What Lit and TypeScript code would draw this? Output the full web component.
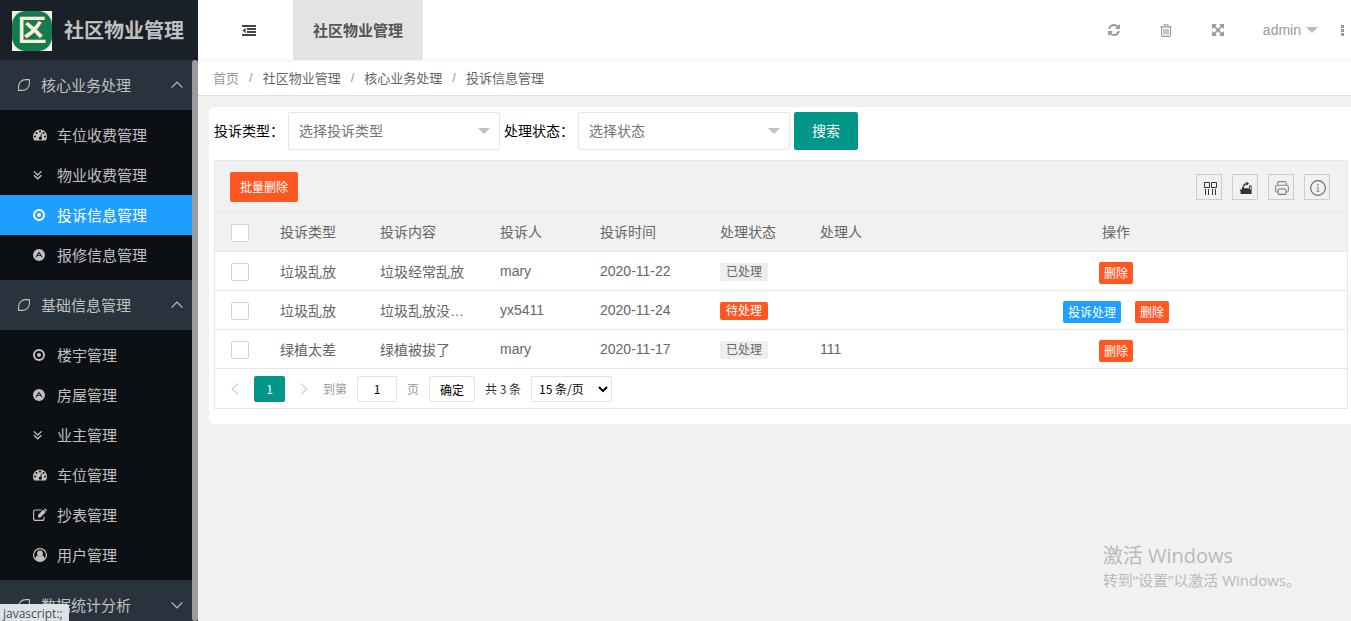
import { LitElement, html, css, svg, nothing } from "lit";
import { customElement, state } from "lit/decorators.js";
import { classMap } from "lit/directives/class-map.js";

type IconName =
  | "leaf" | "up" | "down" | "gauge" | "double-down" | "target" | "adn" | "edit" | "user"
  | "outdent" | "refresh" | "trash" | "expand" | "dots"
  | "columns" | "export" | "print" | "info" | "prev" | "next";

const shapes: Record<IconName, { box: string; body: unknown }> = {
  leaf: {
    box: "0 0 12 12",
    body: svg`<path d="M11.4 .6H7.600A7 7 0 0 0 .6 7.600V11.400H4.400A7 7 0 0 0 11.400 4.400Z" fill="none" stroke="currentColor" stroke-width="1.1" stroke-linejoin="round"/>`,
  },
  up: { box: "0 0 12 12", body: svg`<path d="M.6 8.6 6 3.2 11.4 8.6" fill="none" stroke="currentColor" stroke-width="1.2"/>` },
  down: { box: "0 0 12 12", body: svg`<path d="M.6 3.4 6 8.8 11.4 3.4" fill="none" stroke="currentColor" stroke-width="1.2"/>` },
  gauge: {
    box: "0 0 14 14",
    body: svg`<path fill-rule="evenodd" fill="currentColor" d="M7 1.5A7 7 0 0 0 0 8.5Q0 10.6 1.1 12.3Q1.3 12.6 1.6 12.6H12.4Q12.7 12.6 12.9 12.3Q14 10.6 14 8.5A7 7 0 0 0 7 1.5ZM2 7.5A1 1 0 1 1 2 9.5A1 1 0 1 1 2 7.5ZM3.5 4A1 1 0 1 1 3.5 6A1 1 0 1 1 3.5 4ZM7 2.5A1 1 0 1 1 7 4.5A1 1 0 1 1 7 2.5ZM10.5 4A1 1 0 1 1 10.5 6A1 1 0 1 1 10.5 4ZM12 7.5A1 1 0 1 1 12 9.5A1 1 0 1 1 12 7.5ZM8.2 5.4 9 5.6 8.2 8.7A1.6 1.6 0 1 1 7.4 8.5Z"/>`,
  },
  "double-down": {
    box: "0 0 14 14",
    body: svg`<path d="M.9 3.400 4.700 7 8.500 3.400M.9 7.200 4.700 10.800 8.500 7.200" fill="none" stroke="currentColor" stroke-width="1.3"/>`,
  },
  target: {
    box: "0 0 14 14",
    body: svg`<circle cx="6" cy="7" r="5" fill="none" stroke="currentColor" stroke-width="2"/><circle cx="6" cy="7" r="2" fill="currentColor"/>`,
  },
  adn: {
    box: "0 0 14 14",
    body: svg`<path fill-rule="evenodd" fill="currentColor" d="M6 1A6 6 0 1 0 6 13A6 6 0 1 0 6 1ZM6 3.6 9.6 9.2H8.5L7.8 8.1H4.2L3.5 9.2H2.4ZM6 5.3 4.8 7.2H7.2Z"/>`,
  },
  edit: {
    box: "0 0 14 14",
    body: svg`<path d="M8.6 2H2.6Q.6 2 .6 4V10.4Q.6 12.4 2.6 12.4H9Q11 12.4 11 10.4V8.8" fill="none" stroke="currentColor" stroke-width="1.1"/><path d="M5 7 10.4 1.6 12.8 4 7.4 9.4H5ZM11 1 11.6 .6Q12.1 .3 12.6 .8L13.6 1.8Q14.1 2.3 13.7 2.9L13.3 3.4Z" fill="currentColor"/>`,
  },
  user: {
    box: "0 0 14 14",
    body: svg`<circle cx="7" cy="7" r="6.4" fill="none" stroke="currentColor" stroke-width="1.2"/><circle cx="7" cy="5.4" r="2.9" fill="currentColor"/><path d="M2.4 11Q2.7 7.6 4.8 7.4Q7 9.3 9.2 7.4Q11.3 7.6 11.6 11Q9.8 13.2 7 13.2T2.4 11Z" fill="currentColor"/>`,
  },
  outdent: {
    box: "0 0 14 11",
    body: svg`<path d="M0 0H14V2H0ZM5 3H14V5H5ZM5 6H14V8H5ZM0 9H14V11H0ZM3.6 2.8V8.2L.4 5.5Z" fill="currentColor"/>`,
  },
  refresh: {
    box: "0 0 1792 1792",
    body: svg`<path fill="currentColor" d="M1639 1056q0 5-1 7-64 268-268 434.500t-478 166.500q-146 0-282.500-55t-243.500-157l-129 129q-19 19-45 19t-45-19-19-45v-448q0-26 19-45t45-19h448q26 0 45 19t19 45-19 45l-137 137q71 66 161 102t187 36q134 0 250-65t186-179q11-17 53-117 8-23 30-23h192q13 0 22.500 9.500t9.500 22.500zm25-800v448q0 26-19 45t-45 19h-448q-26 0-45-19t-19-45 19-45l138-138q-148-137-349-137-134 0-250 65t-186 179q-11 17-53 117-8 23-30 23h-199q-13 0-22.500-9.500t-9.500-22.500v-7q65-268 270-434.500t480-166.500q146 0 284 55.500t245 156.500l130-129q19-19 45-19t45 19 19 45z"/>`,
  },
  trash: {
    box: "0 0 12 13",
    body: svg`<path d="M.3 2.900H11.700M1.600 3V11.200Q1.600 12.400 2.800 12.400H9.200Q10.400 12.400 10.400 11.200V3M3.600 2.800 4.200 .7H7.800L8.400 2.800M4 5V10.500M6 5V10.500M8 5V10.500" fill="none" stroke="currentColor" stroke-width="1.100"/>`,
  },
  expand: {
    box: "0 0 1792 1792",
    body: svg`<path fill="currentColor" d="M1411 541l-355 355 355 355 144-144q29-31 70-14 39 17 39 59v448q0 26-19 45t-45 19h-448q-42 0-59-40-17-39 14-69l144-144-355-355-355 355 144 144q31 30 14 69-17 40-59 40h-448q-26 0-45-19t-19-45v-448q0-42 40-59 39-17 69 14l144 144 355-355-355-355-144 144q-19 19-45 19-12 0-24-5-40-17-40-59v-448q0-26 19-45t45-19h448q42 0 59 40 17 39-14 69l-144 144 355 355 355-355-144-144q-31-30-14-69 17-40 59-40h448q26 0 45 19t19 45v448q0 42-39 59-13 5-25 5-26 0-45-19z"/>`,
  },
  dots: { box: "0 0 3 11", body: svg`<path d="M0 0H3V3H0ZM0 4H3V7H0ZM0 8H3V11H0Z" fill="currentColor"/>` },
  columns: {
    box: "0 0 14 14",
    body: svg`<path d="M1.500 1.500H6.500V6.500H1.500ZM8.500 1.500H13.500V6.500H8.500ZM2.500 8V14M5.500 8V14M9.500 8V14M12.500 8V14" fill="none" stroke="currentColor"/>`,
  },
  export: {
    box: "0 0 14 14",
    body: svg`<path fill-rule="evenodd" d="M.5 8.400H3V5.800H5V7.200H10V4.600H12.600V13H1.600V10.600ZM10.800 5.600V8.400H11.800V5.600Z" fill="currentColor"/><path d="M4.600 5.400Q5.200 2.600 8.200 2.600" fill="none" stroke="currentColor" stroke-width="1.300"/><path d="M7.400 .5 10 2.600 7.400 4.700Z" fill="currentColor"/>`,
  },
  print: {
    box: "0 0 14 14",
    body: svg`<g fill="none" stroke-width="1.100"><path d="M2.600 4V2Q2.600 .6 4 .6H10Q11.400 .6 11.400 2V4" stroke="#888"/><path d="M3 11H2Q.6 11 .6 9.600V6Q.6 4.200 2.400 4.200H11.600Q13.400 4.200 13.400 6V9.600Q13.400 11 12 11H11" stroke="#7a8fa5"/><rect x="3" y="8" width="8" height="5.400" rx="1.500" stroke="#777"/></g>`,
  },
  info: {
    box: "0 0 16 16",
    body: svg`<circle cx="8" cy="8" r="7.400" fill="none" stroke="#666" stroke-width="1.100"/><path d="M7.200 4H8.800V5.400H7.200ZM6.500 6.800H8.600V11.300H9.600V12H6.500V11.300H7.500V7.500H6.500Z" fill="#6b8cae"/>`,
  },
  prev: { box: "0 0 12 12", body: svg`<path d="M9 .6 3 6 9 11.400" fill="none" stroke="currentColor" stroke-width="1.200"/>` },
  next: { box: "0 0 12 12", body: svg`<path d="M3 .6 9 6 3 11.400" fill="none" stroke="currentColor" stroke-width="1.200"/>` },
};

const icon = (name: IconName, cls = "i14") =>
  html`<svg class="icon ${cls}" viewBox=${shapes[name].box} aria-hidden="true">${shapes[name].body}</svg>`;

interface MenuGroup {
  title: string;
  open: boolean;
  items: { title: string; icon: IconName }[];
}

@customElement("side-menu")
class SideMenu extends LitElement {
  @state() private current = "投诉信息管理";
  @state() private groups: MenuGroup[] = [
    {
      title: "核心业务处理",
      open: true,
      items: [
        { title: "车位收费管理", icon: "gauge" },
        { title: "物业收费管理", icon: "double-down" },
        { title: "投诉信息管理", icon: "target" },
        { title: "报修信息管理", icon: "adn" },
      ],
    },
    {
      title: "基础信息管理",
      open: true,
      items: [
        { title: "楼宇管理", icon: "target" },
        { title: "房屋管理", icon: "adn" },
        { title: "业主管理", icon: "double-down" },
        { title: "车位管理", icon: "gauge" },
        { title: "抄表管理", icon: "edit" },
        { title: "用户管理", icon: "user" },
      ],
    },
    { title: "数据统计分析", open: false, items: [] },
  ];

  static styles = css`
    :host {
      display: flex;
      flex-direction: column;
      min-height: 0;
      background: #28333e;
      color: #c2c0bf;
      font-size: 15px;
    }
    .logo {
      display: flex;
      align-items: center;
      gap: 12px;
      height: 60px;
      padding: 2px 12px 0;
      box-sizing: border-box;
      flex: none;
      background: #192027;
      color: #c2bfbf;
    }
    .mark {
      display: flex;
      background: #fdebd9;
    }
    .mark span {
      display: flex;
      align-items: center;
      justify-content: center;
      width: 40px;
      height: 40px;
      border-radius: 14px;
      background: #127c50;
      color: #fdebd9;
      font-size: 29px;
      font-weight: 700;
      line-height: 40px;
    }
    h1 {
      margin: 0;
      font-size: 20px;
      line-height: 40px;
      white-space: nowrap;
    }
    .scroller {
      display: flex;
      flex: 1;
      min-height: 0;
      overflow: hidden;
    }
    nav {
      flex: 1;
    }
    .thumb {
      width: 6px;
      border-radius: 3px;
      background: #9b9b9f;
    }
    a {
      display: flex;
      align-items: center;
      color: inherit;
      text-decoration: none;
    }
    a span {
      padding-bottom: 2px;
    }
    .group {
      height: 50px;
      gap: 11px;
      padding: 0 9px 0 18px;
    }
    .group span {
      flex: 1;
    }
    .children {
      list-style: none;
      margin: 0;
      padding: 5px 0;
      background: #0c0f13;
    }
    .item {
      height: 40px;
      gap: 10px;
      padding-left: 33px;
    }
    .active {
      background: #1e9fff;
      color: #fff;
    }
    .icon {
      flex: none;
    }
    .i12 {
      width: 12px;
      height: 12px;
    }
    .i14 {
      width: 14px;
      height: 14px;
    }
  `;

  private toggle(group: MenuGroup, e: Event) {
    e.preventDefault();
    this.groups = this.groups.map((g) => (g === group ? { ...g, open: !g.open } : g));
  }

  private pick(title: string, e: Event) {
    e.preventDefault();
    this.current = title;
  }

  render() {
    return html`
      <div class="logo">
        <div class="mark"><span>区</span></div>
        <h1>社区物业管理</h1>
      </div>
      <div class="scroller">
        <nav>
          ${this.groups.map(
            (g) => html`
              <a class="group" href="#" @click=${(e: Event) => this.toggle(g, e)}>
                ${icon("leaf", "i12")}<span>${g.title}</span>${icon(g.open ? "up" : "down", "i12")}
              </a>
              ${g.open
                ? html`<ul class="children">
                    ${g.items.map(
                      (i) => html`<li>
                        <a
                          class=${classMap({ item: true, active: i.title === this.current })}
                          href="#"
                          @click=${(e: Event) => this.pick(i.title, e)}
                          >${icon(i.icon)}<span>${i.title}</span></a
                        >
                      </li>`
                    )}
                  </ul>`
                : nothing}
            `
          )}
        </nav>
        <div class="thumb"></div>
      </div>
    `;
  }
}

@customElement("top-bar")
class TopBar extends LitElement {
  static styles = css`
    :host {
      display: block;
      background: #fff;
    }
    .bar {
      display: flex;
      height: 60px;
      border-bottom: 1px solid #f2f2f2;
      color: #999;
    }
    button {
      display: flex;
      align-items: center;
      justify-content: center;
      width: 52px;
      padding: 0;
      border: 0;
      background: none;
      color: inherit;
      font: inherit;
    }
    .fold {
      width: 95px;
      padding-left: 7px;
      color: #444;
    }
    .tab {
      display: flex;
      align-items: center;
      padding: 0 20px 2px;
      background: #e3e3e3;
      color: #555;
      font-size: 15px;
      font-weight: 700;
      text-decoration: none;
    }
    .tools {
      display: flex;
      margin-left: auto;
    }
    .account {
      width: auto;
      gap: 5px;
      padding: 0 0 0 19px;
      font-size: 14px;
    }
    .more {
      width: auto;
      padding: 0 7px 0 23px;
    }
    .caret {
      border: 6px solid transparent;
      border-top-color: #bbb;
      border-bottom: 0;
    }
    .crumbs {
      display: flex;
      gap: 10px;
      height: 32px;
      align-items: center;
      padding: 0 15px 2px;
      border-bottom: 1px solid #ddd;
      font-size: 13px;
      color: #999;
    }
    .crumbs a {
      color: #666;
      text-decoration: none;
    }
    .crumbs .home {
      color: #999;
    }
    .outdent {
      width: 14px;
      height: 11px;
    }
    .i14 {
      width: 14px;
      height: 14px;
    }
    .trash {
      width: 12px;
      height: 13px;
    }
    .dots {
      width: 3px;
      height: 11px;
    }
  `;

  render() {
    const trail = ["首页", "社区物业管理", "核心业务处理", "投诉信息管理"];
    return html`
      <header class="bar">
        <button class="fold" aria-label="折叠菜单">${icon("outdent", "outdent")}</button>
        <a class="tab" href="#">社区物业管理</a>
        <div class="tools">
          <button aria-label="刷新">${icon("refresh")}</button>
          <button aria-label="清理">${icon("trash", "trash")}</button>
          <button aria-label="全屏">${icon("expand")}</button>
          <button class="account">admin<span class="caret"></span></button>
          <button class="more" aria-label="更多">${icon("dots", "dots")}</button>
        </div>
      </header>
      <nav class="crumbs">
        ${trail.map(
          (t, i) => html`${i ? html`<span>/</span>` : nothing}<a class=${i ? "" : "home"} href="#">${t}</a>`
        )}
      </nav>
    `;
  }
}

interface Complaint {
  type: string;
  text: string;
  by: string;
  date: string;
  done: boolean;
  handler: string;
}

@customElement("complaint-panel")
class ComplaintPanel extends LitElement {
  private rows: Complaint[] = [
    { type: "垃圾乱放", text: "垃圾经常乱放", by: "mary", date: "2020-11-22", done: true, handler: "" },
    { type: "垃圾乱放", text: "垃圾乱放没…", by: "yx5411", date: "2020-11-24", done: false, handler: "" },
    { type: "绿植太差", text: "绿植被拔了", by: "mary", date: "2020-11-17", done: true, handler: "111" },
  ];

  static styles = css`
    :host {
      display: block;
      padding: 5px 3px 15px 5px;
      border-radius: 5px 0 0 5px;
      background: #fff;
      font-size: 14px;
    }
    button,
    select,
    input {
      font-family: inherit;
      margin: 0;
      box-sizing: border-box;
    }
    .search {
      display: flex;
      align-items: center;
      gap: 4px;
      margin-bottom: 10px;
    }
    .search label {
      padding-bottom: 2px;
      color: #000;
      white-space: nowrap;
    }
    .pick {
      position: relative;
      width: 212px;
    }
    .pick select {
      display: block;
      width: 100%;
      height: 38px;
      padding: 0 10px;
      appearance: none;
      border: 1px solid #e6e6e6;
      border-radius: 2px;
      background: #fff;
      color: #757575;
      font-size: 14px;
    }
    .pick::after {
      content: "";
      position: absolute;
      right: 10px;
      top: 16px;
      border: 6px solid transparent;
      border-top-color: #c2c2c2;
      border-bottom: 0;
      pointer-events: none;
    }
    .btn {
      padding: 0 0 2px;
      border: 0;
      border-radius: 2px;
      color: #fff;
      background: #ff5722;
      font-size: 12px;
    }
    .go {
      width: 64px;
      height: 38px;
      background: #009688;
      font-size: 14px;
    }
    .grid {
      border: 1px solid #e6e6e6;
      color: #666;
    }
    .toolbar {
      display: flex;
      align-items: center;
      gap: 10px;
      padding: 11px 17px 10px 15px;
      border-bottom: 1px solid #e6e6e6;
      background: #f1f1f1;
    }
    .batch {
      height: 30px;
      padding: 0 10px 2px;
      margin-right: auto;
    }
    .tool {
      display: flex;
      align-items: center;
      justify-content: center;
      width: 26px;
      height: 26px;
      padding: 2px 0 0 2px;
      border: 1px solid #ccc;
      background: none;
      color: #333;
    }
    table {
      width: 100%;
      table-layout: fixed;
      border-collapse: separate;
      border-spacing: 0;
    }
    .c50 {
      width: 50px;
    }
    .c80 {
      width: 80px;
    }
    .c100 {
      width: 100px;
    }
    .c120 {
      width: 120px;
    }
    th,
    td {
      height: 38px;
      padding: 0 15px;
      border-bottom: 1px solid #e6e6e6;
      text-align: left;
      font-weight: 400;
      white-space: nowrap;
    }
    th {
      height: 36px;
      padding-bottom: 2px;
      background: #f1f1f1;
    }
    th.act {
      text-align: center;
    }
    .check {
      padding: 2px 16px 0;
      height: 36px;
    }
    .check input {
      display: block;
      appearance: none;
      width: 18px;
      height: 18px;
      border: 1px solid #d2d2d2;
      border-radius: 2px;
      background: #fff;
    }
    .check input:checked {
      background: #009688;
    }
    .badge {
      display: block;
      width: 48px;
      margin-top: 2px;
      border-radius: 2px;
      background: #eee;
      font-size: 12px;
      line-height: 18px;
      text-align: center;
    }
    .wait {
      background: #ff5722;
      color: #fff;
    }
    .ops {
      display: flex;
      justify-content: center;
      gap: 14px;
      padding-top: 4px;
    }
    .small {
      height: 22px;
      padding: 0 5px 2px;
    }
    .blue {
      background: #1e9fff;
    }
    .pager {
      display: flex;
      align-items: center;
      gap: 10px;
      padding: 7px 14px 6px;
      color: #333;
      font-family: "Noto Sans CJK SC", sans-serif;
      font-size: 12px;
      line-height: 26px;
    }
    .muted {
      color: #999;
    }
    .arrow {
      display: flex;
      align-items: center;
      padding: 0;
      border: 0;
      background: none;
      color: #ccc;
    }
    .arrow + .page,
    .page + .arrow,
    .arrow + .muted {
      margin-left: 3px;
    }
    .page {
      width: 31px;
      height: 26px;
      background: #009688;
    }
    .box {
      height: 26px;
      border: 1px solid #e2e2e2;
      border-radius: 2px;
      background: #fff;
      color: #000;
      font-size: 12px;
    }
    .num {
      width: 40px;
      padding: 0 0 2px;
      text-align: center;
    }
    .sure {
      width: 46px;
      padding: 0;
    }
    .size {
      width: 81px;
      padding: 0 3px 2px;
    }
    .i12 {
      width: 12px;
      height: 14px;
    }
    .i14 {
      width: 14px;
      height: 14px;
    }
    .i16 {
      width: 16px;
      height: 16px;
    }
  `;

  render() {
    return html`
      <form class="search" @submit=${(e: Event) => e.preventDefault()}>
        <label for="type">投诉类型：</label>
        <div class="pick"><select id="type"><option>选择投诉类型</option></select></div>
        <label for="status">处理状态：</label>
        <div class="pick"><select id="status"><option>选择状态</option></select></div>
        <button class="btn go">搜索</button>
      </form>
      <div class="grid">
        <div class="toolbar">
          <button class="btn batch">批量删除</button>
          <button class="tool" aria-label="筛选列">${icon("columns")}</button>
          <button class="tool" aria-label="导出">${icon("export")}</button>
          <button class="tool" aria-label="打印">${icon("print")}</button>
          <button class="tool" aria-label="提示">${icon("info", "i16")}</button>
        </div>
        <table>
          <colgroup>
            <col class="c50" /><col class="c100" /><col class="c120" /><col class="c100" />
            <col class="c120" /><col class="c100" /><col class="c80" /><col />
          </colgroup>
          <thead>
            <tr>
              <th class="check"><input type="checkbox" aria-label="全选" /></th>
              <th>投诉类型</th>
              <th>投诉内容</th>
              <th>投诉人</th>
              <th>投诉时间</th>
              <th>处理状态</th>
              <th>处理人</th>
              <th class="act">操作</th>
            </tr>
          </thead>
          <tbody>
            ${this.rows.map(
              (r) => html`<tr>
                <td class="check"><input type="checkbox" aria-label="选择" /></td>
                <td>${r.type}</td>
                <td>${r.text}</td>
                <td>${r.by}</td>
                <td>${r.date}</td>
                <td><span class=${classMap({ badge: true, wait: !r.done })}>${r.done ? "已处理" : "待处理"}</span></td>
                <td>${r.handler}</td>
                <td>
                  <div class="ops">
                    ${r.done ? nothing : html`<button class="btn small blue">投诉处理</button>`}
                    <button class="btn small">删除</button>
                  </div>
                </td>
              </tr>`
            )}
          </tbody>
        </table>
        <div class="pager">
          <button class="arrow" aria-label="上一页">${icon("prev", "i12")}</button>
          <button class="btn page">1</button>
          <button class="arrow" aria-label="下一页">${icon("next", "i12")}</button>
          <label class="muted" for="page">到第</label>
          <input class="box num" id="page" value="1" />
          <span class="muted">页</span>
          <button class="box sure">确定</button>
          <span>共 3 条</span>
          <select class="box size" aria-label="每页条数"><option>15 条/页</option></select>
        </div>
      </div>
    `;
  }
}

@customElement("app-root")
class AppRoot extends LitElement {
  static styles = css`
    :host {
      position: relative;
      display: grid;
      grid-template-columns: 198px minmax(0, 1fr);
      height: 100vh;
      overflow: hidden;
      background: #f1f1f1;
      font-family: "Liberation Sans", "Noto Sans CJK SC", sans-serif;
      font-size: 14px;
    }
    main {
      padding: 11px 0 0 11px;
    }
    .activate {
      position: absolute;
      right: 50px;
      bottom: 29px;
      color: #b9b9b9;
      font-family: "Open Sans", "Noto Sans CJK SC", sans-serif;
      font-size: 15px;
      line-height: 24px;
      pointer-events: none;
    }
    .activate p {
      margin: 0;
    }
    .activate .big {
      font-size: 20px;
    }
    .link-hint {
      position: absolute;
      left: 0;
      bottom: 0;
      width: 69px;
      height: 17px;
      padding-left: 3px;
      box-sizing: border-box;
      border-radius: 0 3px 0 0;
      background: #dee1e6;
      color: #4a4d51;
      font-family: "Open Sans", sans-serif;
      font-size: 12px;
      line-height: 20px;
    }
    .drawer {
      position: absolute;
      right: -33px;
      top: 284px;
      width: 30px;
      height: 44px;
      box-shadow: 0 0 10px rgba(0, 0, 0, 0.15);
    }
  `;

  render() {
    return html`
      <side-menu></side-menu>
      <div>
        <top-bar></top-bar>
        <main><complaint-panel></complaint-panel></main>
      </div>
      <div class="drawer"></div>
      <div class="activate">
        <p class="big">激活 Windows</p>
        <p>转到“设置”以激活 Windows。</p>
      </div>
      <div class="link-hint">javascript:;</div>
    `;
  }
}
